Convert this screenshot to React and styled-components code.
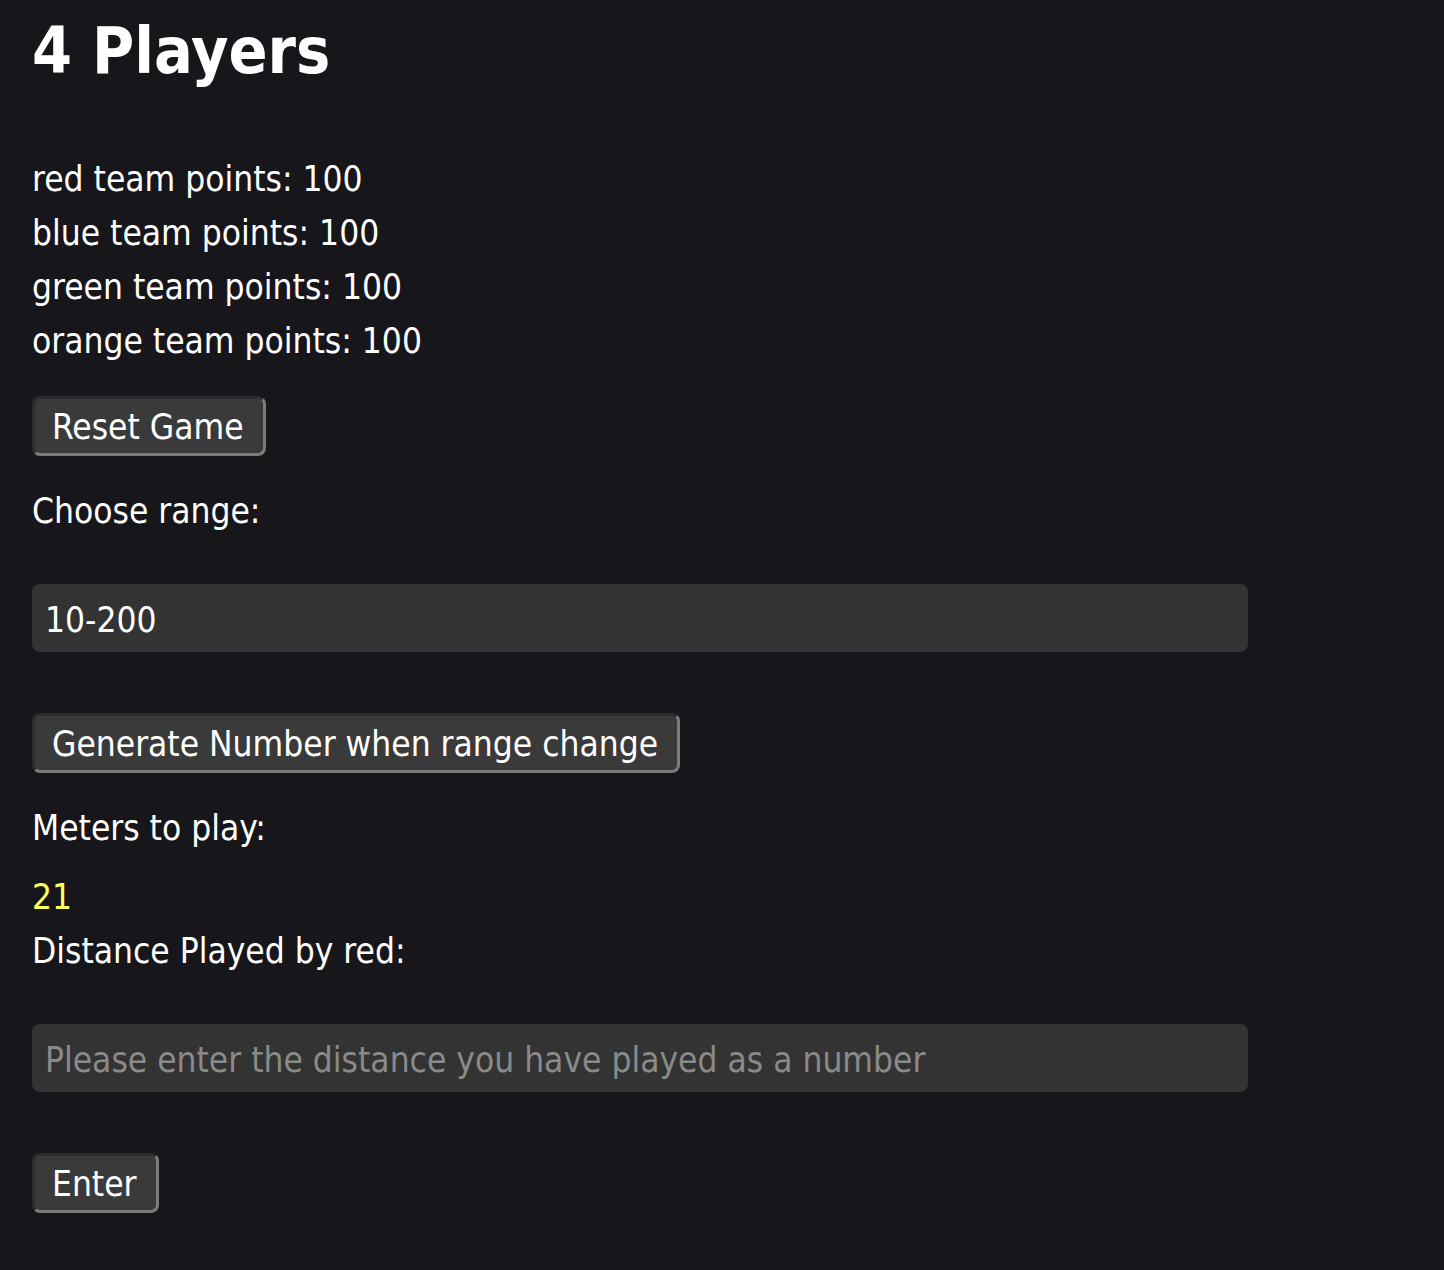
import React, {useState} from 'react';
import styled, {createGlobalStyle} from 'styled-components';

const colors = {
  page: '#16161b',
  text: '#ffffff',
  field: '#333333',
  button: '#3a3a3a',
  buttonEdge: '#7b7b7b',
  placeholder: '#8a8a8a',
  highlight: '#ffff5a',
};

const GlobalStyle = createGlobalStyle`
  html, body {
    margin: 0;
    padding: 0;
    background: ${colors.page};
    min-height: 100%;
  }
  body {
    color: ${colors.text};
    font-family: "DejaVu Sans Condensed", "DejaVu Sans", sans-serif;
    font-stretch: condensed;
  }
`;

const Page = styled.main`
  min-height: 1270px;
  box-sizing: border-box;
  padding: 11px 32px 40px;
  display: flex;
  flex-direction: column;
  align-items: flex-start;
`;

const Title = styled.h1`
  margin: 0 0 61px;
  font-size: 64px;
  line-height: 80px;
  font-weight: 700;
`;

const Line = styled.p`
  margin: ${(props) => props.$gap || '0'};
  font-size: 35px;
  line-height: 54px;
  color: ${(props) => props.$highlight ? colors.highlight : colors.text};
`;

const ScoreList = styled.div`
  display: flex;
  flex-direction: column;
  margin-bottom: 28px;
`;

const Button = styled.button`
  height: 60px;
  box-sizing: border-box;
  padding: 2px 19px 0 17px;
  margin-bottom: ${(props) => props.$below || '0'};
  background: ${colors.button};
  color: ${colors.text};
  font-family: inherit;
  font-stretch: condensed;
  font-size: 35px;
  border: 3px solid;
  border-color: #2c2c2f ${colors.buttonEdge} ${colors.buttonEdge} #2c2c2f;
  border-radius: 8px;
  cursor: pointer;
`;

const Field = styled.input`
  width: 1216px;
  height: 68px;
  box-sizing: border-box;
  margin: 46px 0 61px;
  padding: 4px 14px 0 13px;
  border: none;
  border-radius: 8px;
  background: ${colors.field};
  color: ${colors.text};
  font-family: inherit;
  font-stretch: condensed;
  font-size: 35px;
  outline: none;

  &::placeholder {
    color: ${colors.placeholder};
  }
`;

const teams = ['red', 'blue', 'green', 'orange'];

function App() {
  const [range, setRange] = useState('10-200');
  const [distance, setDistance] = useState('');

  return (
    <Page>
      <GlobalStyle />
      <Title>4 Players</Title>

      <ScoreList>
        {teams.map((team) => (
          <Line key={team}>{team} team points: 100</Line>
        ))}
      </ScoreList>

      <Button $below="28px">Reset Game</Button>
      <Line>Choose range:</Line>
      <Field value={range} onChange={(e) => setRange(e.target.value)} />

      <Button $below="28px">Generate Number when range change</Button>
      <Line $gap="0 0 15px">Meters to play:</Line>
      <Line $highlight>21</Line>
      <Line>Distance Played by red:</Line>
      <Field
        value={distance}
        onChange={(e) => setDistance(e.target.value)}
        placeholder="Please enter the distance you have played as a number"
      />

      <Button>Enter</Button>
    </Page>
  );
}

export default App;
